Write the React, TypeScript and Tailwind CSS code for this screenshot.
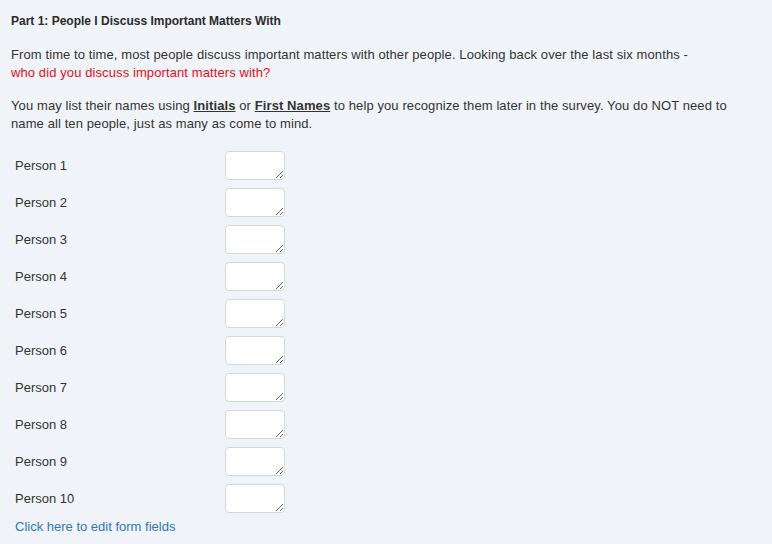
import React from "react";

const people = Array.from({ length: 10 }, (_, i) => `Person ${i + 1}`);

export default function App() {
  return (
    <div className="min-h-[544px] w-full bg-[#f0f3f7] text-[#333] font-['Liberation_Sans',Arial,sans-serif]">
      <div className="px-[11px] pt-[13px] max-w-[745px]">
        {/* Heading */}
        <h1 className="text-[12px] leading-[16px] font-bold text-[#2b2b2b]">
          Part 1: People I Discuss Important Matters With
        </h1>

        {/* Intro */}
        <p className="mt-[17px] text-[13px] leading-[18px] tracking-[0.1px]">
          From time to time, most people discuss important matters with other people. Looking back over the last six months -
          <br />
          <span className="text-[#e8101a]">who did you discuss important matters with?</span>
        </p>

        <p className="mt-[15px] text-[13px] leading-[18px] tracking-[0.1px]">
          You may list their names using <span className="font-bold underline">Initials</span> or{" "}
          <span className="font-bold underline">First Names</span> to help you recognize them later in the survey. You do NOT need to
          name all ten people, just as many as come to mind.
        </p>
      </div>

      {/* Name fields */}
      <div className="mt-[18px] flex flex-col gap-[8px] pl-[15px]">
        {people.map((label) => (
          <div key={label} className="flex items-center h-[29px]">
            <label className="w-[210px] text-[13px]">{label}</label>
            <textarea className="w-[60px] h-[29px] bg-white border border-[#d4d7db] rounded-[4px] resize" />
          </div>
        ))}
      </div>

      <div className="pl-[15px] pt-[1px] pb-[8px]">
        <a href="#" className="text-[13px] text-[#2f78bf]">
          Click here to edit form fields
        </a>
      </div>
    </div>
  );
}
